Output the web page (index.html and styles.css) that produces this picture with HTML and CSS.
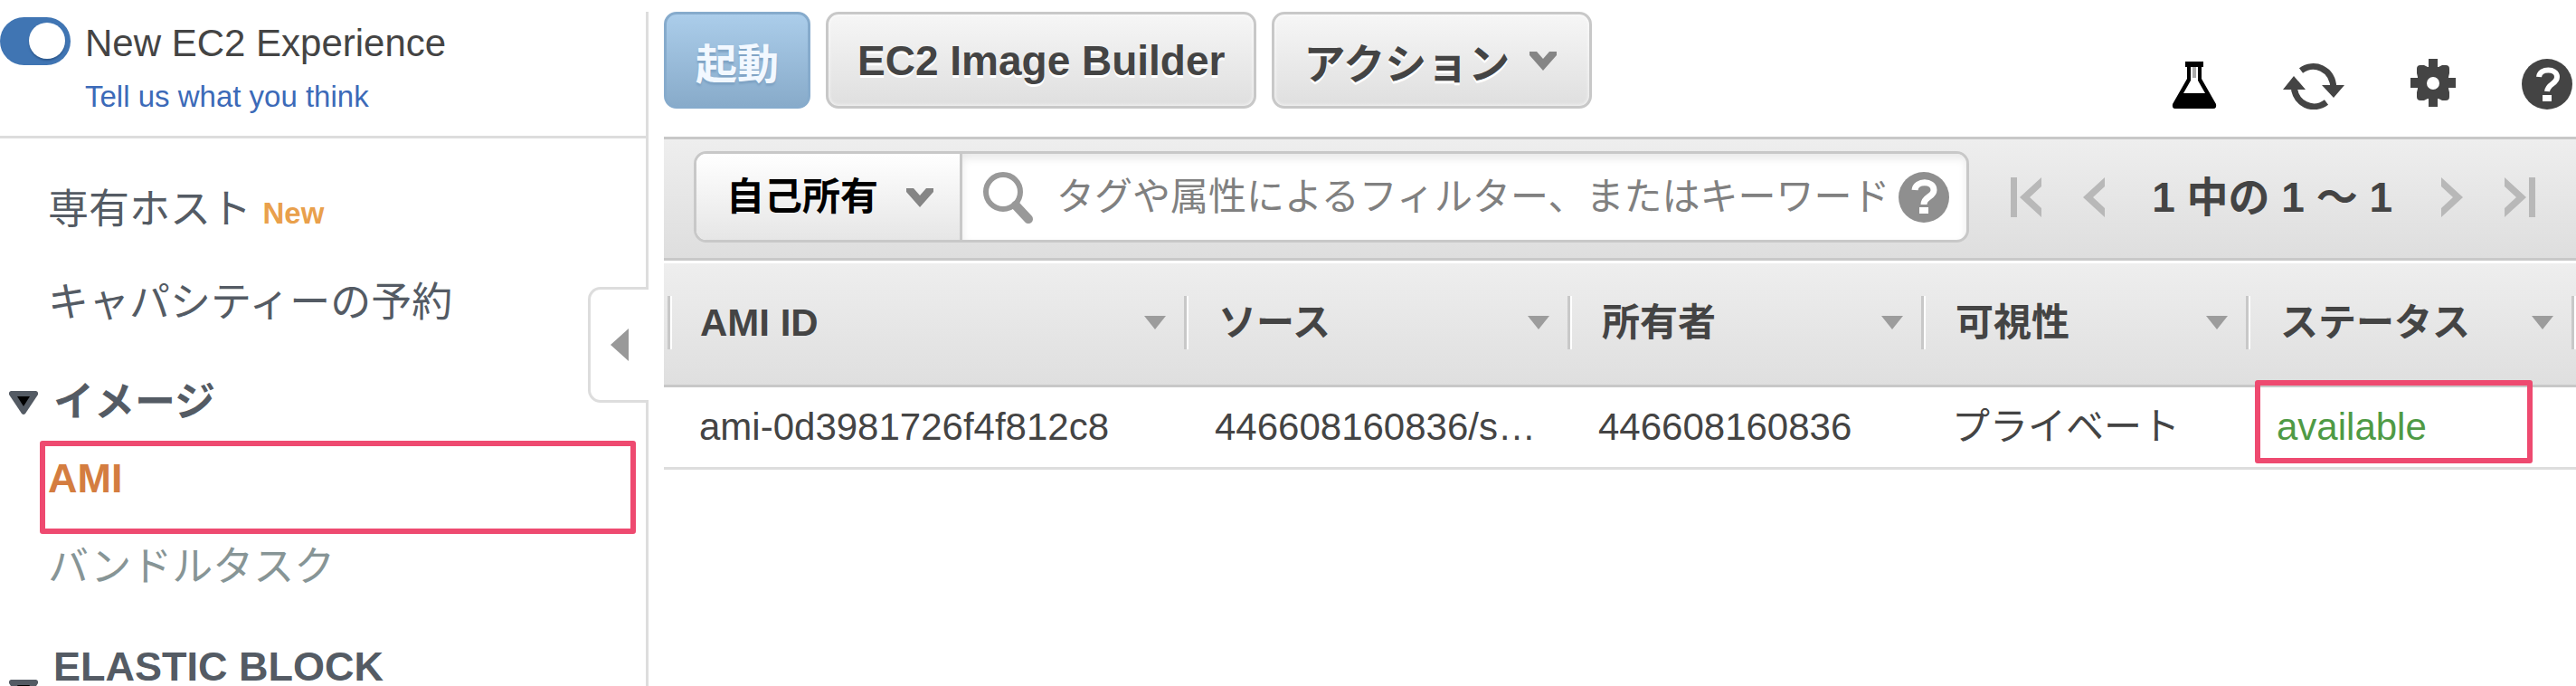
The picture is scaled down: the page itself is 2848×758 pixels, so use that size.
FILE: index.html
```html
<!DOCTYPE html>
<html lang="ja">
<head>
    <meta charset="utf-8" />
    <meta name="viewport" content="width=device-width, initial-scale=1" />
    <title>EC2 Management Console</title>
    <link rel="stylesheet" href="styles.css">
</head>
<body>
    <div class="console">
        <aside class="sidebar">
            <div class="experience">
                <input type="checkbox" id="newExperience" class="toggle" checked>
                <div class="experience-text">
                    <label for="newExperience">New EC2 Experience</label>
                    <a href="#feedback">Tell us what you think</a>
                </div>
            </div>

            <nav>
                <ul class="nav-list nav-first">
                    <li><a href="#hosts">専有ホスト</a> <span class="new-badge">New</span></li>
                    <li><a href="#reservations">キャパシティーの予約</a></li>
                </ul>

                <button type="button" class="nav-heading">
                    <svg width="32" height="26" viewBox="0 0 32 26"><path d="M2 0h28q3 1 2 4L18 25q-2 2-4 0L0 4Q-1 1 2 0z" fill="#545b64"/><path d="M9 6h14l-7 11z" fill="#000"/></svg>
                    <span>イメージ</span>
                </button>
                <ul class="nav-list">
                    <li class="highlight"><a href="#ami" class="current">AMI</a></li>
                    <li><a href="#bundle" class="muted">バンドルタスク</a></li>
                </ul>

                <button type="button" class="nav-heading two-line">
                    <svg width="32" height="26" viewBox="0 0 32 26"><path d="M2 0h28q3 1 2 4L18 25q-2 2-4 0L0 4Q-1 1 2 0z" fill="#545b64"/><path d="M9 6h14l-7 11z" fill="#000"/></svg>
                    <span>ELASTIC BLOCK</span>
                </button>
            </nav>

            <button type="button" class="collapse" aria-label="Collapse">
                <svg width="20" height="36" viewBox="0 0 20 36"><path d="M20 0v36L0 18z" fill="#999"/></svg>
            </button>
        </aside>

        <main class="content">
            <div class="toolbar">
                <button type="button" class="btn btn-primary">起動</button>
                <button type="button" class="btn">EC2 Image Builder</button>
                <button type="button" class="btn btn-menu">
                    アクション
                    <svg width="30" height="22" viewBox="0 0 30 22"><path d="M0 1h8l7 8 7-8h8v4L15 22 0 5z" fill="#858585"/></svg>
                </button>

                <div class="tools">
                    <button type="button" class="icon-btn" aria-label="Experiments">
                        <svg width="50" height="56" viewBox="0 0 50 56"><path d="M15 3h20v6h-2v13l16 28q1 5-3 5H4q-4 0-3-5l16-28V9h-2z" fill="#000"/><path d="M21 9h8v15l8 14H13l8-14z" fill="#fff"/><path d="M23 9h4v12h-4z" fill="#aaa"/></svg>
                    </button>
                    <button type="button" class="icon-btn" aria-label="Refresh">
                        <svg width="68" height="56" viewBox="0 0 68 56"><g fill="none" stroke="#444" stroke-width="7"><path d="M20 13C34 3 55 10 56 33"/><path d="M12 29c1 21 21 30 36 19"/></g><path d="M43 29h25L56 43zM0 34l12-15 13 15z" fill="#444"/></svg>
                    </button>
                    <button type="button" class="icon-btn" aria-label="Settings">
                        <svg width="50" height="56" viewBox="0 0 50 56"><g fill="#444"><path d="M20 0h10v53H20zM0 21h50v11H0z"/><path d="M7 11q0-4 4-4h4l4 2h12l4-2h4q4 0 4 4v5l-1 4v13l1 4v5q0 4-4 4h-4l-4-2H19l-4 2h-4q-4 0-4-4v-5l1-4V20l-1-4z"/></g><circle cx="25" cy="27" r="7" fill="#fff"/></svg>
                    </button>
                    <button type="button" class="icon-btn" aria-label="Help">
                        <svg width="56" height="56" viewBox="0 0 56 56"><circle cx="28" cy="28" r="28" fill="#444"/><path d="M19 20c1-10 20-10 20 0 0 8-10 7-11 16" fill="none" stroke="#fff" stroke-width="6"/><path d="M23 40h10v7H23z" fill="#fff"/></svg>
                    </button>
                </div>
            </div>

            <div class="filter-bar">
                <div class="search-box">
                    <div class="owner">
                        <select aria-label="所有者フィルター">
                            <option>自己所有</option>
                        </select>
                        <svg width="30" height="22" viewBox="0 0 30 22"><path d="M0 1h8l7 8 7-8h8v4L15 22 0 5z" fill="#858585"/></svg>
                    </div>
                    <div class="search">
                        <svg width="56" height="58" viewBox="0 0 56 58"><circle cx="23" cy="23" r="19" fill="none" stroke="#999" stroke-width="6"/><path d="M37 38l14 15" stroke="#999" stroke-width="10" stroke-linecap="round"/></svg>
                        <input type="text" aria-label="フィルター" placeholder="タグや属性によるフィルター、またはキーワード">
                        <button type="button" class="icon-btn" aria-label="Search help">
                            <svg width="56" height="56" viewBox="0 0 56 56"><circle cx="28" cy="28" r="28" fill="#8f8f8f"/><path d="M18 20c1-11 21-11 21 0 0 8-11 7-11 16" fill="none" stroke="#fff" stroke-width="7"/><path d="M23 39h10v7H23z" fill="#fff"/></svg>
                        </button>
                    </div>
                </div>

                <div class="pager">
                    <button type="button" class="icon-btn" aria-label="First page">
                        <svg width="34" height="44" viewBox="0 0 34 44" fill="#b8b8b8"><path d="M0 0h7v44H0zM34 0v10L21 22l13 12v10L10 22z"/></svg>
                    </button>
                    <button type="button" class="icon-btn" aria-label="Previous page">
                        <svg width="24" height="44" viewBox="0 0 24 44" fill="#b8b8b8"><path d="M24 0v10L11 22l13 12v10L0 22z"/></svg>
                    </button>
                    <span class="range">1 中の 1 〜 1</span>
                    <button type="button" class="icon-btn" aria-label="Next page">
                        <svg width="24" height="44" viewBox="0 0 24 44" fill="#b8b8b8"><path d="M0 0v10l13 12L0 34v10l24-22z"/></svg>
                    </button>
                    <button type="button" class="icon-btn" aria-label="Last page">
                        <svg width="34" height="44" viewBox="0 0 34 44" fill="#b8b8b8"><path d="M27 0h7v44h-7zM0 0v10l13 12L0 34v10l24-22z"/></svg>
                    </button>
                </div>
            </div>

            <table>
                <colgroup>
                    <col class="col-id">
                    <col class="col-source">
                    <col class="col-owner">
                    <col class="col-visibility">
                    <col>
                </colgroup>
                <thead>
                    <tr>
                        <th><div class="th-inner">AMI ID <span class="sort"></span></div></th>
                        <th><div class="th-inner">ソース <span class="sort"></span></div></th>
                        <th><div class="th-inner">所有者 <span class="sort"></span></div></th>
                        <th><div class="th-inner">可視性 <span class="sort"></span></div></th>
                        <th><div class="th-inner">ステータス <span class="sort"></span></div></th>
                    </tr>
                </thead>
                <tbody>
                    <tr>
                        <td>ami-0d3981726f4f812c8</td>
                        <td>446608160836/s…</td>
                        <td>446608160836</td>
                        <td>プライベート</td>
                        <td class="status highlight">available</td>
                    </tr>
                </tbody>
            </table>
        </main>
    </div>
</body>
</html>
```
FILE: styles.css
```css
* {
    box-sizing: border-box;
}
body {
    margin: 0;
    background: #fff;
    color: #444;
    font-family: "Liberation Sans", "Noto Sans CJK JP", sans-serif;
    font-size: 42px;
}
button, input, select {
    font-family: inherit;
}
svg {
    display: block;
    flex: none;
}
a {
    color: inherit;
    text-decoration: none;
}
.console {
    display: flex;
    gap: 17px;
    height: 100vh;
    padding-top: 13px;
    overflow: hidden;
}

/* sidebar */
.sidebar {
    position: relative;
    flex: none;
    width: 717px;
    border-right: 3px solid #ddd;
}
.experience {
    display: flex;
    gap: 16px;
    height: 140px;
    padding-top: 6px;
    border-bottom: 3px solid #ddd;
}
.toggle {
    appearance: none;
    flex: none;
    width: 78px;
    height: 53px;
    margin: 0;
    padding: 6px;
    border-radius: 27px;
    background: #4075b3;
}
.toggle::before {
    content: "";
    display: block;
    width: 40px;
    height: 40px;
    border-radius: 50%;
    background: #fff;
    box-shadow: 0 2px 2px #2e5a8f;
}
.toggle:checked::before {
    margin-left: auto;
}
.experience-text {
    display: flex;
    flex-direction: column;
    gap: 10px;
    line-height: 58px;
}
.experience-text a {
    color: #3c6ab8;
    font-size: 33px;
    line-height: 40px;
}
.nav-list {
    margin: 0;
    padding: 0 11px 0 53px;
    list-style: none;
    color: #545b64;
    font-size: 45px;
    line-height: 98px;
}
.nav-first {
    padding-top: 29px;
    line-height: 99px;
}
.new-badge {
    color: #e9a04b;
    font-size: 33px;
    font-weight: bold;
}
.current {
    color: #d47d40;
    font-weight: bold;
}
.muted {
    color: #879596;
}
.nav-heading {
    display: flex;
    align-items: center;
    gap: 17px;
    width: 100%;
    margin-top: 26px;
    padding: 8px 10px;
    border: 0;
    background: none;
    color: #545b64;
    font-size: 45px;
    font-weight: bold;
    line-height: 54px;
    text-align: left;
}
.two-line span {
    padding-bottom: 54px;
}
.collapse {
    position: absolute;
    top: 304px;
    right: -3px;
    width: 67px;
    height: 128px;
    padding: 0 0 0 22px;
    border: 3px solid #ddd;
    border-right: 0;
    border-radius: 14px 0 0 14px;
    background: #fff;
}

/* red frames round the selected menu item and the status */
.highlight {
    position: relative;
}
.highlight::after {
    content: "";
    position: absolute;
    top: 7px;
    right: 0;
    bottom: -12px;
    left: -9px;
    border: 6px solid #ee4a70;
    border-radius: 3px;
    pointer-events: none;
}
.status.highlight::after {
    top: -8px;
    right: 48px;
    bottom: 4px;
    left: 5px;
}

/* toolbar */
.content {
    flex: 1;
    min-width: 0;
}
.toolbar {
    display: flex;
    gap: 17px;
    padding-bottom: 30px;
}
.btn {
    display: flex;
    align-items: center;
    gap: 22px;
    height: 107px;
    padding: 0 32px;
    border: 3px solid #c8c8c8;
    border-radius: 14px;
    background: linear-gradient(#f6f6f6, #dfdfdf);
    box-shadow: inset 0 0 4px #fff;
    color: #444;
    font-size: 46px;
    font-weight: bold;
    text-shadow: 0 3px 0 #fff;
    white-space: nowrap;
}
.btn-primary {
    border-color: #86abcc;
    background: linear-gradient(#abcdea, #88abca);
    box-shadow: none;
    color: #f2f8ff;
    text-shadow: 0 3px 2px #7fa3c4;
}
.btn-menu {
    padding-right: 36px;
}
.tools {
    display: flex;
    align-items: center;
    gap: 73px;
    margin-left: auto;
    padding: 52px 4px 0 0;
}
.icon-btn {
    flex: none;
    padding: 0;
    border: 0;
    background: none;
}

/* filter bar */
.filter-bar {
    display: flex;
    align-items: center;
    gap: 46px;
    padding: 13px 45px 17px 33px;
    border-top: 3px solid #c8c8c8;
    border-bottom: 3px solid #c8c8c8;
    background: linear-gradient(#eee, #dedede);
}
.search-box {
    display: flex;
    flex: 1;
    min-width: 0;
    height: 101px;
    border: 3px solid #c8c8c8;
    border-radius: 14px;
    background: #fff;
    overflow: hidden;
}
.owner {
    display: flex;
    align-items: center;
    flex: none;
    width: 294px;
    padding-right: 29px;
    border-right: 3px solid #c8c8c8;
    background: linear-gradient(#fff, #e6e6e6);
}
.owner select {
    appearance: none;
    flex: 1;
    min-width: 0;
    height: 100%;
    padding: 0 0 0 33px;
    border: 0;
    background: none;
    color: #000;
    font-size: 42px;
    font-weight: bold;
}
.search {
    display: flex;
    align-items: center;
    flex: 1;
    min-width: 0;
    padding: 0 19px 0 22px;
    box-shadow: inset 0 5px 10px #e8e8e8;
}
.search input {
    flex: 1;
    min-width: 0;
    height: 100%;
    padding: 0 0 0 26px;
    border: 0;
    outline: 0;
    background: none;
    font-size: 42px;
}
.search input::placeholder {
    color: #808080;
}
.pager {
    display: flex;
    align-items: center;
    flex: none;
    gap: 46px;
}
.range {
    padding: 0 8px 0 6px;
    font-size: 46px;
    font-weight: bold;
    line-height: 50px;
    white-space: nowrap;
}

/* image list */
table {
    width: 100%;
    margin-top: 3px;
    table-layout: fixed;
    border-collapse: separate;
    border-spacing: 0;
}
.col-id {
    width: 580px;
}
.col-source {
    width: 424px;
}
.col-owner {
    width: 391px;
}
.col-visibility {
    width: 359px;
}
th {
    padding: 36px 2px 39px 0;
    border-bottom: 3px solid #c8c8c8;
    background: linear-gradient(#eee, #dfdfdf);
    text-align: left;
}
.th-inner {
    display: flex;
    align-items: center;
    justify-content: space-between;
    height: 59px;
    padding: 0 20px 0 33px;
    border-right: 3px solid #c8c8c8;
    box-shadow: 2px 0 0 #fff;
    line-height: 56px;
    white-space: nowrap;
}
th:first-child .th-inner {
    margin-left: 4px;
    border-left: 3px solid #c8c8c8;
    box-shadow: 2px 0 0 #fff, inset 2px 0 0 #fff;
}
.sort {
    width: 24px;
    height: 15px;
    background: #9c9c9c;
    clip-path: polygon(0 0, 100% 0, 50% 100%);
}
td {
    height: 91px;
    padding: 0 0 0 29px;
    border-bottom: 3px solid #ddd;
    line-height: 88px;
    white-space: nowrap;
}
td:first-child {
    padding-left: 39px;
}
.status {
    color: #4f9a45;
}
```
